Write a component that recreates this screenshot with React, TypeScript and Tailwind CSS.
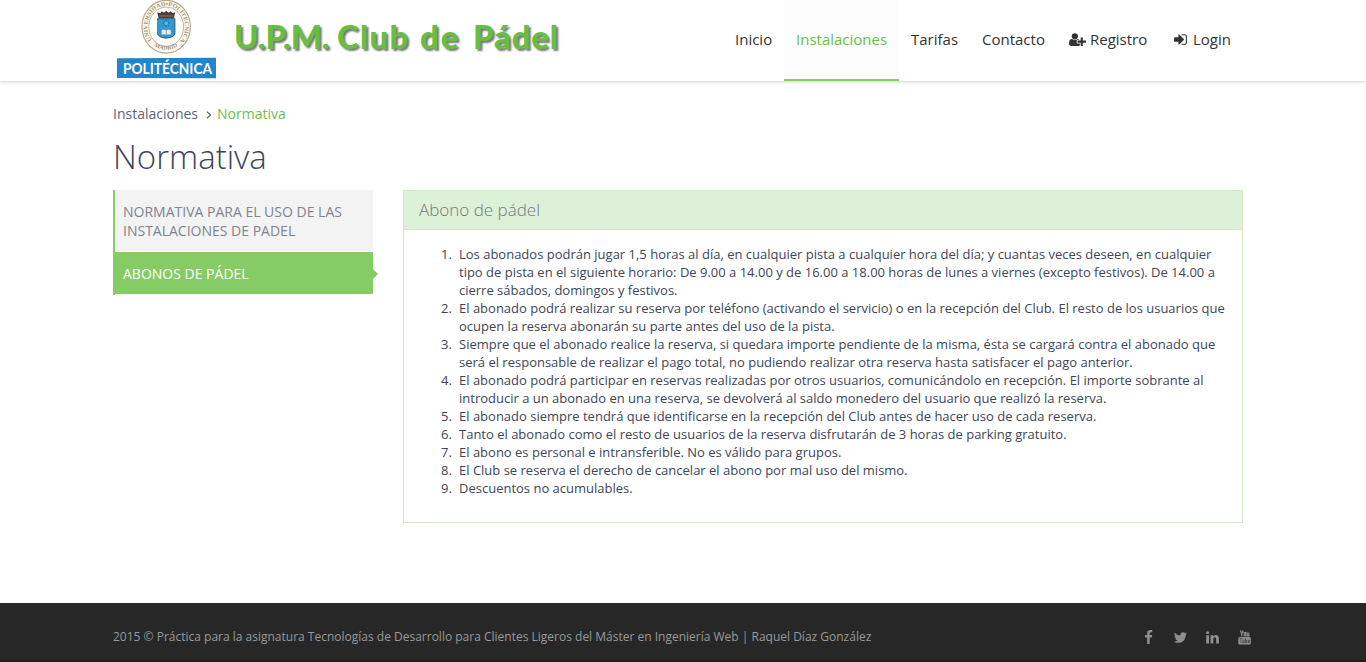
import type { ReactNode } from 'react';

const USER_PLUS =
  'M704 896q-159 0-271.5-112.5t-112.5-271.5 112.5-271.5 271.5-112.5 271.5 112.5 112.5 271.5-112.5 271.5-271.5 112.5zm960 128h352q13 0 22.5 9.5t9.5 22.5v192q0 13-9.5 22.5t-22.5 9.5h-352v352q0 13-9.5 22.5t-22.5 9.5h-192q-13 0-22.5-9.5t-9.5-22.5v-352h-352q-13 0-22.5-9.5t-9.5-22.5v-192q0-13 9.5-22.5t22.5-9.5h352v-352q0-13 9.5-22.5t22.5-9.5h192q13 0 22.5 9.5t9.5 22.5v352zm-736 224q0 52 38 90t90 38h256v238q-68 50-171 50h-874q-121 0-194-69t-73-190q0-53 3.5-103.5t14-109 26.5-108.5 43-97.5 62-81 85.5-53.5 111.5-20q19 0 39 17 79 61 154.5 91.5t164.5 30.5 164.5-30.5 154.5-91.5q20-17 39-17 132 0 217 96h-223q-52 0-90 38t-38 90v192z';
const SIGN_IN =
  'M1312 896q0 26-19 45l-544 544q-19 19-45 19t-45-19-19-45v-288h-448q-26 0-45-19t-19-45v-384q0-26 19-45t45-19h448v-288q0-26 19-45t45-19 45 19l544 544q19 19 19 45zm352-352v704q0 119-84.5 203.5t-203.5 84.5h-320q-13 0-22.5-9.5t-9.5-22.5q0-4-1-20t-.5-26.5 3-23.5 10-19.5 20.5-6.5h320q66 0 113-47t47-113v-704q0-66-47-113t-113-47h-312l-11.5-1-11.5-3-8-5.5-7-9-2-13.5q0-4-1-20t-.5-26.5 3-23.5 10-19.5 20.5-6.5h320q119 0 203.5 84.5t84.5 203.5z';
const SOCIAL = [
  'M1343 12v264h-157q-86 0-116 36t-30 108v189h293l-39 296h-254v759h-306v-759h-255v-296h255v-218q0-186 104-288.5t277-102.5q147 0 228 12z',
  'M1684 408q-67 98-162 167 1 14 1 42 0 130-38 259.5t-115.5 248.5-184.5 210.5-258 146-323 54.5q-271 0-496-145 35 4 78 4 225 0 401-138-105-2-188-64.5t-114-159.5q33 5 61 5 43 0 85-11-112-23-185.5-111.5t-73.5-205.5v-4q68 38 146 41-66-44-105-115t-39-154q0-88 44-163 121 149 294.5 238.5t371.5 99.5q-8-38-8-74 0-134 94.5-228.5t228.5-94.5q140 0 236 102 109-21 205-78-37 115-142 178 93-10 186-50z',
  'M477 625v991h-330v-991h330zm21-306q1 73-50.5 122t-135.5 49h-2q-82 0-132-49t-50-122q0-74 51.5-122.5t134.5-48.5 133 48.5 51 122.5zm1166 729v568h-329v-530q0-105-40.5-164.5t-126.5-59.5q-63 0-105.5 34.5t-63.5 85.5q-11 30-11 81v553h-329q2-399 2-647t-1-296l-1-48h329v144h-2q20-32 41-56t56.5-52 87-43.5 114.5-15.5q171 0 275 113.5t104 332.5z',
];

const RULES = [
  'Los abonados podrán jugar 1,5 horas al día, en cualquier pista a cualquier hora del día; y cuantas veces deseen, en cualquier tipo de pista en el siguiente horario: De 9.00 a 14.00 y de 16.00 a 18.00 horas de lunes a viernes (excepto festivos). De 14.00 a cierre sábados, domingos y festivos.',
  'El abonado podrá realizar su reserva por teléfono (activando el servicio) o en la recepción del Club. El resto de los usuarios que ocupen la reserva abonarán su parte antes del uso de la pista.',
  'Siempre que el abonado realice la reserva, si quedara importe pendiente de la misma, ésta se cargará contra el abonado que será el responsable de realizar el pago total, no pudiendo realizar otra reserva hasta satisfacer el pago anterior.',
  'El abonado podrá participar en reservas realizadas por otros usuarios, comunicándolo en recepción. El importe sobrante al introducir a un abonado en una reserva, se devolverá al saldo monedero del usuario que realizó la reserva.',
  'El abonado siempre tendrá que identificarse en la recepción del Club antes de hacer uso de cada reserva.',
  'Tanto el abonado como el resto de usuarios de la reserva disfrutarán de 3 horas de parking gratuito.',
  'El abono es personal e intransferible. No es válido para grupos.',
  'El Club se reserva el derecho de cancelar el abono por mal uso del mismo.',
  'Descuentos no acumulables.',
];

function Logo() {
  return (
    <svg width="100" height="80" viewBox="0 0 100 80" className="shrink-0" aria-label="Politécnica">
      <defs>
        <path id="ring" d="M35.500 40.500A18.800 21 0 1 1 64.500 40.500" />
        <path id="ringBottom" d="M37 45.500A22.500 24.500 0 0 0 63 45.500" />
      </defs>
      <g transform="translate(-.8 -.3)">
        <ellipse cx="50" cy="27" rx="24.200" ry="26.400" fill="#fbf9f3" stroke="#b9ab84" strokeWidth="1.200" />
        <ellipse cx="50" cy="27" rx="17.400" ry="19.600" fill="#fff" stroke="#c4b995" strokeWidth="1" />
        <g fill="#a3956d" fontFamily="'Liberation Serif', serif" fontSize="5.800" fontWeight="700">
          <text>
            <textPath href="#ring" textLength="92" lengthAdjust="spacingAndGlyphs">
              UNIVERSIDAD•POLITECNICA
            </textPath>
          </text>
          <text>
            <textPath href="#ringBottom" startOffset="1" textLength="25" lengthAdjust="spacingAndGlyphs">
              MADRID
            </textPath>
          </text>
        </g>
        <path d="M41 12.500l3 1 1.500-2 2.500 1.500 2-2 2.200 2 2.300-1.500 1.500 2 3-1-1.300 6h-15.400z" fill="#4a3c3c" />
        <path d="M43 16.300h14" stroke="#a86f53" strokeWidth="1" />
        <path d="M41.300 19h17.400v14.500q0 4-8.700 5-8.700-1-8.700-5z" fill="#2f9ad8" stroke="#2d5c6c" strokeWidth="1" />
        <path d="M41.500 20v13.500q0 3.500 5 4.400" fill="none" stroke="#589983" strokeWidth="1" />
        <path d="M50 20v7M46.500 23.500h7M47.500 21l5 5M52.500 21l-5 5" stroke="#265f80" strokeWidth="1" />
        <circle cx="50" cy="23.500" r="2" fill="#60b7dd" />
        <path d="M45 30q2.500-1 5 0 2.500-1 5 0v5.500q-2.500-1-5 0-2.500-1-5 0z" fill="#e2ebed" stroke="#516e78" strokeWidth=".6" />
        <path d="M50 30v5.500" stroke="#658b99" strokeWidth=".7" />
      </g>
      <path d="M0 58.300l99-.6v20.600l-99-.4z" fill="#2484c6" />
      <text x="6" y="74.200" textLength="89" lengthAdjust="spacingAndGlyphs" fill="#fff" fontFamily="Lato, sans-serif" fontSize="15.800" fontWeight="700">
        POLITÉCNICA
      </text>
    </svg>
  );
}

function NavItem({ children, width, active = false }: { children: ReactNode; width: string; active?: boolean }) {
  return (
    <a
      className={`flex h-[81px] items-center whitespace-nowrap border-b-2 px-3 pb-[2px] text-[15px] ${width} ${
        active ? 'border-[#85cc66] bg-[#fcfcfc] text-[#6abf4b]' : 'border-transparent text-[#333]'
      }`}
    >
      {children}
    </a>
  );
}

export default function App() {
  return (
    <div className="flex h-[662px] w-[1366px] flex-col overflow-hidden bg-white font-['Open_Sans',sans-serif] text-[13px] leading-[18px] text-[#3e4656]">
      <header className="h-[81px] shrink-0 shadow-[0_1px_3px_rgba(0,0,0,0.18)]">
        <div className="flex h-full pl-[117px]">
          <Logo />
          <div className="flex w-[506px] whitespace-pre pl-[17px] pt-[13px] font-[Lato,sans-serif] text-[33px] font-black leading-[46px] text-[#66be42] [text-shadow:2px_2px_2px_#777]">
            <span className="w-[103px] tracking-[-0.2px]">U.P.M. </span>
            <span className="w-[83px] tracking-[1.2px]">Club </span>
            <span className="w-[53px] tracking-[2px]">de </span>
            <span className="tracking-[0.8px]">Pádel</span>
          </div>
          <nav className="flex">
            <NavItem width="w-[61px]">Inicio</NavItem>
            <NavItem width="w-[115px]" active>Instalaciones</NavItem>
            <NavItem width="w-[71px]">Tarifas</NavItem>
            <NavItem width="w-[87px]">Contacto</NavItem>
            <NavItem width="w-[103px]">
              <svg width="17" height="15" viewBox="0 0 2048 1792" className="mr-1 mt-[2px] shrink-0" fill="currentColor"><path d={USER_PLUS} /></svg>
              Registro
            </NavItem>
            <NavItem width="w-[84px]">
              <svg width="15" height="15" viewBox="0 0 1792 1792" className="ml-px mr-[5px] mt-[2px] shrink-0" fill="currentColor"><path d={SIGN_IN} /></svg>
              Login
            </NavItem>
          </nav>
        </div>
      </header>

      <main className="flex-1 px-[113px] pt-[23px]">
        <div className="flex h-5 items-center text-[14px] text-[#5c6473]">
          <span className="w-[93px]">Instalaciones</span>
          <svg width="6" height="8" viewBox="0 0 6 8" className="mr-[5px] mt-px" fill="none" stroke="currentColor" strokeWidth="1.200"><path d="M1 .7L4.500 4 1 7.300" /></svg>
          <span className="text-[#6abf4b]">Normativa</span>
        </div>
        <h1 className="mt-[11px] text-[33px] font-light leading-[44px] text-[#3e4656]">Normativa</h1>
        <div className="mt-[11px] flex items-start gap-[30px]">
          <aside className="w-[260px] text-[14px]">
            <div className="flex flex-col gap-px border-l-2 border-[#85cc66] pb-px uppercase">
              <a className="h-[61px] bg-[#f3f3f3] pl-2 pt-3 leading-[19px] text-[#80848e]">
                Normativa para el uso de las<br />instalaciones de padel
              </a>
              <a className="relative flex h-[42px] items-center bg-[#85cc66] pl-2 pt-[2px] text-white">
                Abonos de pádel
                <svg width="5" height="10" viewBox="0 0 5 10" className="absolute -right-[5px] top-[17px]" fill="#85cc66"><path d="M0 0l5 5-5 5z" /></svg>
              </a>
            </div>
          </aside>
          <section className="h-[333px] w-[840px] border border-[#d2e9c3]">
            <h2 className="h-[39px] border-b border-[#d2e9c3] bg-[#ddf0d8] pl-[15px] pt-[9px] text-[17px] font-light leading-[20px] text-[#737a7d]">
              Abono de pádel
            </h2>
            <ol className="pl-[37px] pr-[15px] pt-[15px]">
              {RULES.map((rule, i) => (
                <li key={rule} className="flex">
                  <span className="w-[18px] shrink-0">{i + 1}.</span>
                  <span>{rule}</span>
                </li>
              ))}
            </ol>
          </section>
        </div>
      </main>

      <footer className="flex h-[59px] shrink-0 items-start justify-between border-b-2 border-[#231f20] bg-[#272727] pl-[113px] pr-[114.5px] pt-[25px] text-[12px] text-[#999]">
        <p className="whitespace-nowrap">
          2015 © Práctica para la asignatura Tecnologías de Desarrollo para Clientes Ligeros del Máster en Ingeniería Web | Raquel Díaz González
        </p>
        <div className="flex gap-[17px] pt-[1.5px] text-[#909090]">
          {SOCIAL.map((d) => (
            <svg key={d} width="15" height="15" viewBox="0 0 1792 1792" fill="currentColor"><path d={d} /></svg>
          ))}
          <svg width="15" height="15" viewBox="0 0 15 15" fill="none">
            <path d="M3.500 .5l1.300 3.300L6.100 .5M4.800 3.500v2.800M7.300 2.700h1.400v3H7.300zM10.300 2.400v3.400h1.500V2.400" stroke="currentColor" strokeWidth="1.200" />
            <rect x="1.300" y="7" width="12.600" height="7.500" rx="1.600" fill="currentColor" />
            <path d="M2.500 8.500h2.800M3.900 8.500v4.700M5.900 9.600v3.100h1.400V9.600M8.500 8.200v4.600h1.300v-2.700H8.500M12.700 12.500h-1.500v-2.300h1.500v1.200h-1.500" stroke="#272727" strokeWidth=".55" />
          </svg>
        </div>
      </footer>
    </div>
  );
}
